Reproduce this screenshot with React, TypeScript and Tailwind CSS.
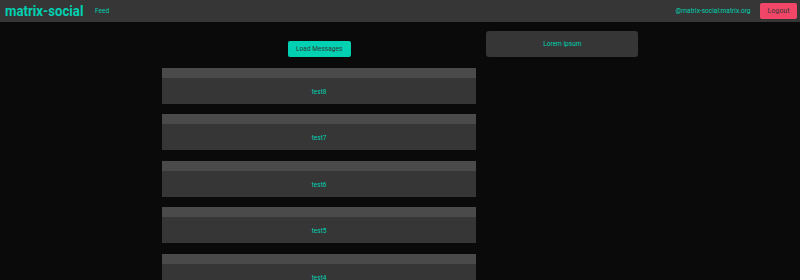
export default function App() {
  const posts = ["test8", "test7", "test6", "test5", "test4", "test3"];
  return (
    <div className="w-[800px] h-[280px] overflow-hidden bg-[#0a0a0a] font-['Roboto',sans-serif]">
      <nav className="h-[22px] bg-[#363636] flex items-center justify-between">
        <div className="flex items-center">
          <span className="ml-[5px] inline-block origin-left scale-x-[0.88] text-[15px] font-bold text-[#00d1b2] leading-none">matrix-social</span>
          <span className="ml-[1px] inline-block origin-left scale-x-[0.82] text-[8px] text-[#00d1b2] leading-none">Feed</span>
        </div>
        <div className="flex items-center">
          <span className="inline-block origin-right scale-x-[0.82] text-[8px] text-[#00d1b2] leading-none">@matrix-social:matrix.org</span>
          <button className="ml-[10px] mr-[3px] w-[37px] h-[16px] rounded-[2px] bg-[#f14668] text-[8px] text-[#363636] leading-none">
            <span className="inline-block scale-x-[0.88]">Logout</span>
          </button>
        </div>
      </nav>
      <div className="flex">
        <div className="ml-[162px] w-[314px] flex flex-col items-center pt-[19px]">
          <button className="w-[63px] h-[16px] rounded-[2px] bg-[#00d1b2] text-[8px] text-[#363636] leading-none">
            <span className="inline-block scale-x-[0.82]">Load Messages</span>
          </button>
          <div className="mt-[11px] w-full flex flex-col gap-[10.4px]">
            {posts.map((p) => (
              <div key={p} className="w-full h-[36px] flex flex-col">
                <div className="h-[10px] bg-[#4a4a4a]" />
                <div className="flex-1 bg-[#363636] flex items-center justify-center text-[8px] text-[#00d1b2] leading-none">
                  <span className="inline-block scale-x-[0.82] translate-y-[0.5px]">{p}</span>
                </div>
              </div>
            ))}
          </div>
        </div>
        <div className="ml-[10px] mt-[9px] w-[152px] h-[26px] rounded-[3px] bg-[#363636] flex items-center justify-center text-[8px] text-[#00d1b2] leading-none">
          <span className="inline-block scale-x-[0.82]">Lorem ipsum</span>
        </div>
      </div>
    </div>
  );
}
